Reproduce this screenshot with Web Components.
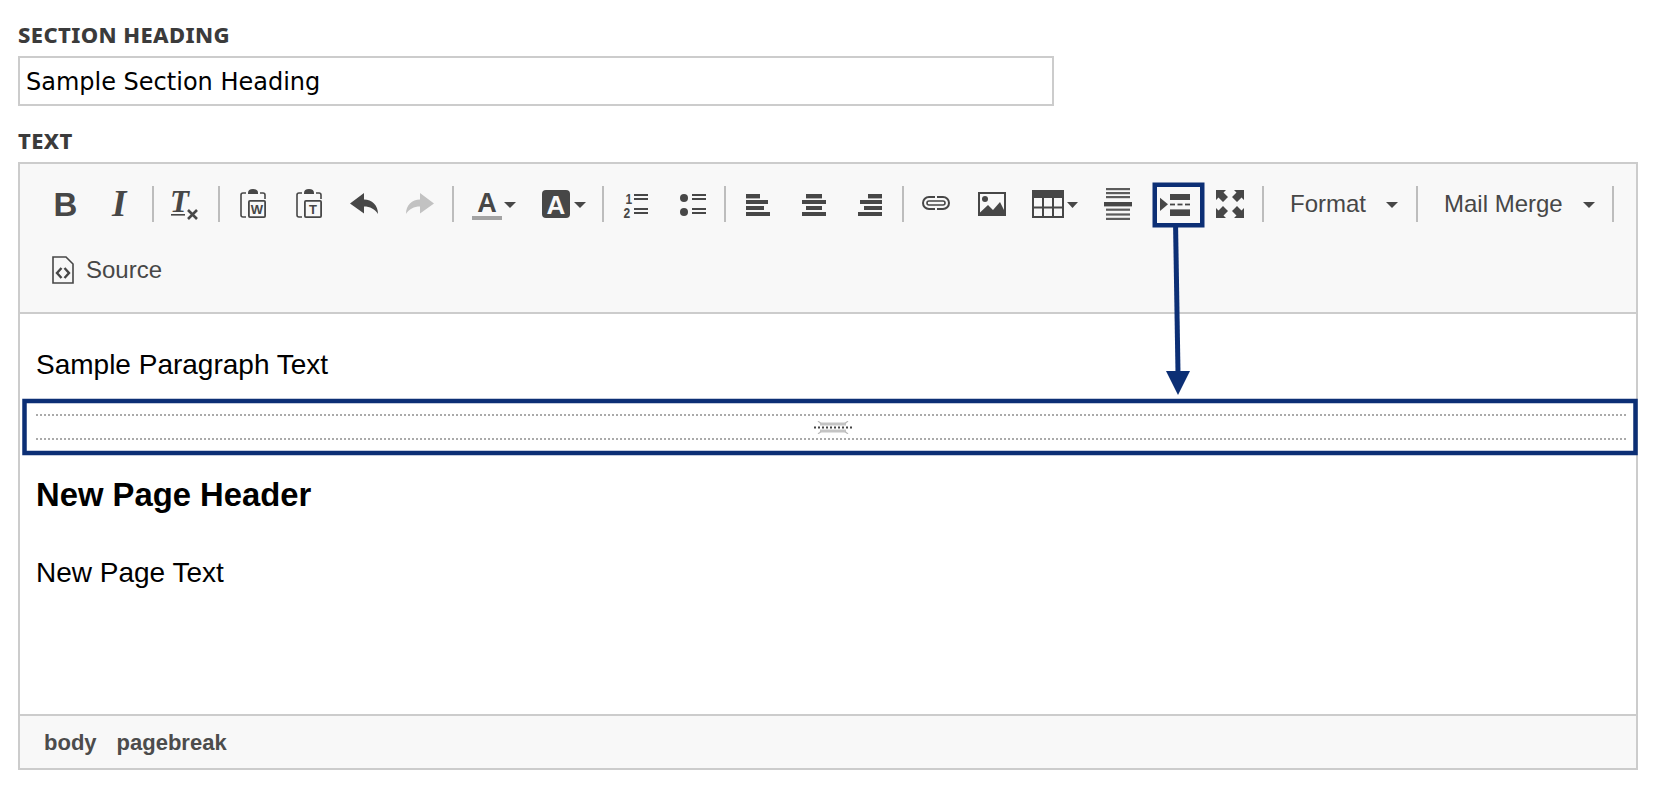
<!DOCTYPE html>
<html lang="en">
<head>
<meta charset="utf-8">
<title>Section editor</title>
<style>
  html, body { margin: 0; padding: 0; background: #fff; }
  body { font-family: "Liberation Sans", Arial, sans-serif; color: #000; }
</style>
</head>
<body>
<section-form>
  <field-label>SECTION HEADING</field-label>
  <text-field value="Sample Section Heading"></text-field>
  <field-label>TEXT</field-label>
  <rich-editor>
    <ed-toolbar slot="toolbar">
      <ed-tool icon="bold" w="56"></ed-tool>
      <ed-tool icon="italic" w="56"></ed-tool>
      <ed-sep w="8"></ed-sep>
      <ed-tool icon="clear" w="56"></ed-tool>
      <ed-sep w="12"></ed-sep>
      <ed-tool icon="pasteword" w="56"></ed-tool>
      <ed-tool icon="pastetext" w="56"></ed-tool>
      <ed-tool icon="undo" w="54"></ed-tool>
      <ed-tool icon="redo" w="58"></ed-tool>
      <ed-sep w="8"></ed-sep>
      <ed-tool icon="textcolor" w="74"></ed-tool>
      <ed-tool icon="bgcolor" w="66"></ed-tool>
      <ed-sep w="12"></ed-sep>
      <ed-tool icon="numbered" w="54"></ed-tool>
      <ed-tool icon="bulleted" w="60"></ed-tool>
      <ed-sep w="4"></ed-sep>
      <ed-tool icon="alignleft" w="62"></ed-tool>
      <ed-tool icon="aligncenter" w="50"></ed-tool>
      <ed-tool icon="alignright" w="62"></ed-tool>
      <ed-sep w="4"></ed-sep>
      <ed-tool icon="link" w="62"></ed-tool>
      <ed-tool icon="image" w="50"></ed-tool>
      <ed-tool icon="table" w="76"></ed-tool>
      <ed-tool icon="rule" w="50"></ed-tool>
      <ed-tool icon="pagebreak" w="64"></ed-tool>
      <ed-tool icon="maximize" w="46"></ed-tool>
      <ed-sep w="20"></ed-sep>
      <ed-combo w="143" pad="17" caret>Format</ed-combo>
      <ed-sep w="2"></ed-sep>
      <ed-combo w="194" pad="26" caret>Mail Merge</ed-combo>
      <ed-sep w="2"></ed-sep>
      <ed-combo w="140" pad="15" icon="source">Source</ed-combo>
    </ed-toolbar>
    <editor-para>Sample Paragraph Text</editor-para>
    <page-break></page-break>
    <editor-heading>New Page Header</editor-heading>
    <editor-para class="after">New Page Text</editor-para>
    <path-bar slot="footer">
      <path-item>body</path-item>
      <path-item>pagebreak</path-item>
    </path-bar>
  </rich-editor>
  <ed-callouts></ed-callouts>
</section-form>

<script>
"use strict";

const BLUE = "#0c2f75";
const ICON_TOP = 186;

// every icon sits in a 36px tall box so the row centres them the same way
const svg = (w, top, body) =>
  `<svg width="${w}" height="36" viewBox="0 ${ICON_TOP - top} ${w} 36" fill="currentColor">${body}</svg>`;

const bars = (rows) =>
  rows.map(([x, y, w, h]) => `<rect x="${x}" y="${y}" width="${w}" height="${h}"/>`).join("");

const clipboard = (letter) => `
  <path d="M6 5H3Q1 5 1 7V27Q1 29 3 29H6M20 5H23Q25 5 25 7V11" fill="none" stroke="currentColor" stroke-width="1.6"/>
  <path d="M8 5Q8 1 13 1Q18 1 18 5V6H8Z"/>
  <rect x="8.9" y="12.9" width="16.2" height="16.2" rx="1" fill="none" stroke="currentColor" stroke-width="1.8"/>
  <text x="17" y="26" text-anchor="middle" font-size="13" font-weight="700" class="sans">${letter}</text>`;

const undoPath = "M0 10.5L14 0V6.5C22 6.5 28 12 28 21C25 16 20 13.5 14 13.5V20.5Z";
const arrowCorner = "M0 0H10L7.5 2.5L12 7L7 12L2.5 7.5L0 10Z";

const ICONS = {
  bold: svg(20, 192, `<text x="-1.6" y="24" font-size="33" font-weight="700" class="sans">B</text>`),
  italic: svg(18, 192, `<text x="0" y="24" font-size="37" font-weight="700" font-style="italic" class="serif">I</text>`),
  clear: svg(28, 192, `
    <text x="-1" y="20" font-size="31" font-weight="700" font-style="italic" class="serif">T</text>
    <rect x="0" y="22" width="14" height="1.6"/>
    <path d="M17 18L26 27M26 18L17 27" stroke="currentColor" stroke-width="2.6" fill="none"/>`),
  pasteword: svg(26, 188, clipboard("W")),
  pastetext: svg(26, 188, clipboard("T")),
  undo: svg(28, 193, `<path d="${undoPath}"/>`),
  redo: svg(28, 193, `<path d="${undoPath}" fill="#c2c2c2" transform="matrix(-1 0 0 1 28 0)"/>`),
  textcolor: svg(44, 192, `
    <text x="15" y="20" text-anchor="middle" font-size="27" font-weight="700" class="sans">A</text>
    <rect x="0" y="24" width="30" height="4" fill="#a3a3a3"/>
    <polygon points="32,10 44,10 38,16"/>`),
  bgcolor: svg(44, 190, `
    <rect width="28" height="28" rx="4"/>
    <text x="14" y="23.5" text-anchor="middle" font-size="26" font-weight="700" fill="#f8f8f8" class="sans">A</text>
    <polygon points="32,12 44,12 38,18"/>`),
  numbered: svg(24, 193, `
    <text transform="translate(1.5 11) scale(.8 1)" font-size="15" font-weight="700" class="sans">1</text>
    <text transform="translate(-.5 25) scale(.8 1)" font-size="15" font-weight="700" class="sans">2</text>
    ${bars([[10, 1, 14, 2], [10, 5, 14, 2], [10, 15, 14, 2], [10, 19, 14, 2]])}`),
  bulleted: svg(26, 193, `
    <circle cx="4" cy="5" r="4"/><circle cx="4" cy="19" r="4"/>
    ${bars([[12, 1, 14, 2], [12, 5, 14, 2], [12, 15, 14, 2], [12, 19, 14, 2]])}`),
  alignleft: svg(24, 194, bars([[0, 0, 14, 4.4], [0, 6, 22, 4], [0, 12, 18, 4], [0, 18, 24, 4]])),
  aligncenter: svg(24, 194, bars([[4, 0, 16, 4.4], [0, 6, 24, 4], [4, 12, 16, 4], [0, 18, 24, 4]])),
  alignright: svg(24, 194, bars([[10, 0, 14, 4.4], [2, 6, 22, 4], [6, 12, 18, 4], [0, 18, 24, 4]])),
  link: svg(28, 196, `
    <g fill="none" stroke="currentColor">
      <path d="M13 1H7A6 6 0 0 0 7 13H13M15 1H21A6 6 0 0 1 21 13H15" stroke-width="2"/>
      <rect x="5" y="5" width="18" height="4" rx="2" stroke-width="1.6"/>
    </g>`),
  image: svg(28, 192, `
    <rect x="1" y="1" width="26" height="22" fill="none" stroke="currentColor" stroke-width="2"/>
    <circle cx="7" cy="7" r="3"/>
    <polygon points="2,22 2,20.5 10,13 15,18 22,10 26,18 26,22"/>`),
  table: svg(46, 190, `
    <rect x="0" y="0" width="32" height="8"/>
    <g fill="none" stroke="currentColor" stroke-width="2">
      <rect x="1" y="1" width="30" height="26"/>
      <path d="M11 8V27M21 8V27M1 17.5H31"/>
    </g>
    <polygon points="35,12 46,12 40.5,18"/>`),
  rule: svg(28, 188, `
    <g fill="#5c5c5c">${bars([[2, 0, 24, 2.2], [2, 4, 24, 2.2], [2, 8, 24, 2.2], [2, 20.6, 24, 2.2], [2, 25.4, 24, 2.2], [2, 29.8, 24, 2.2]])}</g>
    <rect x="0" y="14" width="28" height="4.4"/>`),
  pagebreak: svg(30, 194, `
    <polygon points="0,3.7 8,10.3 0,17"/>
    ${bars([[10, 0, 20, 6], [10, 9.6, 5, 1.8], [17.5, 9.6, 5, 1.8], [25, 9.6, 5, 1.8], [10, 15.4, 20, 6.6]])}`),
  maximize: svg(28, 190, `
    <path d="${arrowCorner}"/>
    <path d="${arrowCorner}" transform="matrix(-1 0 0 1 28 0)"/>
    <path d="${arrowCorner}" transform="matrix(1 0 0 -1 0 28)"/>
    <path d="${arrowCorner}" transform="matrix(-1 0 0 -1 28 28)"/>`),
  source: svg(22, 256 - 66, `
    <path d="M1 1H14L21 8V27H1Z" fill="none" stroke="currentColor" stroke-width="1.6"/>
    <path d="M9.5 12L5 17L9.5 22M12.5 12L17 17L12.5 22" fill="none" stroke="currentColor" stroke-width="2.4"/>`),
};

class SectionForm extends HTMLElement {
  constructor() {
    super();
    this.attachShadow({ mode: "open" }).innerHTML = `
    <style>
      :host {
        display: block;
        position: relative;
        box-sizing: border-box;
        width: 1674px;
        height: 790px;
        padding: 21px 0 0 18px;
        overflow: hidden;
      }
    </style>
    <slot></slot>`;
  }
}

class FieldLabel extends HTMLElement {
  constructor() {
    super();
    this.attachShadow({ mode: "open" }).innerHTML = `
    <style>
      :host {
        display: block;
        height: 28px;
        margin-bottom: 7px;
        font: 800 22px/26px "Noto Sans", sans-serif;
        letter-spacing: .4px;
        color: #3b3b3b;
      }
    </style>
    <slot></slot>`;
  }
}

class TextField extends HTMLElement {
  constructor() {
    super();
    this.attachShadow({ mode: "open" }).innerHTML = `
    <style>
      :host {
        display: block;
        box-sizing: border-box;
        width: 1036px;
        height: 50px;
        margin-bottom: 21px;
        border: 2px solid #cccccc;
        padding-left: 6px;
        font: 24px/48px "DejaVu Sans", sans-serif;
        color: #000;
        white-space: nowrap;
      }
    </style>
    <span id="val"></span>`;
  }
  connectedCallback() {
    this.shadowRoot.querySelector("#val").textContent = this.getAttribute("value");
  }
}

class RichEditor extends HTMLElement {
  constructor() {
    super();
    this.attachShadow({ mode: "open" }).innerHTML = `
    <style>
      :host {
        display: block;
        box-sizing: border-box;
        width: 1620px;
        border: 2px solid #cccccc;
      }
      .body {
        box-sizing: border-box;
        height: 400px;
        padding: 31px 8px 0 16px;
      }
    </style>
    <slot name="toolbar"></slot>
    <div class="body"><slot></slot></div>
    <slot name="footer"></slot>`;
  }
}

class EdToolbar extends HTMLElement {
  constructor() {
    super();
    this.attachShadow({ mode: "open" }).innerHTML = `
    <style>
      :host {
        display: flex;
        flex-wrap: wrap;
        row-gap: 6px;
        box-sizing: content-box;
        height: 126px;
        padding: 10px 0 12px 17px;
        background: #f8f8f8;
        border-bottom: 2px solid #cccccc;
        color: #474747;
      }
    </style>
    <slot></slot>`;
  }
}

class EdTool extends HTMLElement {
  constructor() {
    super();
    this.attachShadow({ mode: "open" }).innerHTML = `
    <style>
      :host {
        display: flex;
        align-items: center;
        justify-content: center;
        height: 60px;
        flex: none;
      }
      svg { display: block; overflow: visible; }
      .sans { font-family: "Liberation Sans", sans-serif; }
      .serif { font-family: "Liberation Serif", serif; }
    </style>
    <span id="ic"></span>`;
  }
  connectedCallback() {
    this.style.width = `${this.getAttribute("w")}px`;
    this.shadowRoot.querySelector("#ic").innerHTML = ICONS[this.getAttribute("icon")];
  }
}

class EdSep extends HTMLElement {
  constructor() {
    super();
    this.attachShadow({ mode: "open" }).innerHTML = `
    <style>
      :host {
        display: flex;
        align-items: center;
        justify-content: center;
        height: 60px;
        flex: none;
      }
      i { display: block; width: 2px; height: 36px; background: #bdbdbd; }
    </style>
    <i></i>`;
  }
  connectedCallback() {
    this.style.width = `${this.getAttribute("w")}px`;
  }
}

class EdCombo extends HTMLElement {
  constructor() {
    super();
    this.attachShadow({ mode: "open" }).innerHTML = `
    <style>
      :host {
        display: flex;
        align-items: center;
        box-sizing: border-box;
        height: 60px;
        flex: none;
        font: 24px "Liberation Sans", sans-serif;
        color: #474747;
      }
      #ic svg { display: block; margin-right: 12px; }
      #ic:empty, .caret[hidden] { display: none; }
      .caret {
        width: 0;
        height: 0;
        margin: 2px 0 0 20px;
        border-top: 6px solid #474747;
        border-left: 6px solid transparent;
        border-right: 6px solid transparent;
      }
    </style>
    <span id="ic"></span><slot></slot><span class="caret" hidden></span>`;
  }
  connectedCallback() {
    this.style.width = `${this.getAttribute("w")}px`;
    this.style.paddingLeft = `${this.getAttribute("pad")}px`;
    const icon = this.getAttribute("icon");
    if (icon) this.shadowRoot.querySelector("#ic").innerHTML = ICONS[icon];
    this.shadowRoot.querySelector(".caret").hidden = !this.hasAttribute("caret");
  }
}

class EditorPara extends HTMLElement {
  constructor() {
    super();
    this.attachShadow({ mode: "open" }).innerHTML = `
    <style>
      :host {
        display: block;
        font: 28px/40px "Liberation Sans", Arial, sans-serif;
        color: #000;
      }
      :host(.after) { margin-top: 36px; }
    </style>
    <slot></slot>`;
  }
}

class EditorHeading extends HTMLElement {
  constructor() {
    super();
    this.attachShadow({ mode: "open" }).innerHTML = `
    <style>
      :host {
        display: block;
        margin-top: 33px;
        font: 700 32.8px/44px "Liberation Sans", Arial, sans-serif;
        color: #000;
      }
    </style>
    <slot></slot>`;
  }
}

class PageBreak extends HTMLElement {
  constructor() {
    super();
    this.attachShadow({ mode: "open" }).innerHTML = `
    <style>
      :host {
        display: flex;
        align-items: center;
        justify-content: center;
        height: 26px;
        margin-top: 29px;
        background-image:
          repeating-linear-gradient(to right, #aaa 0 2px, transparent 2px 4px),
          repeating-linear-gradient(to right, #aaa 0 2px, transparent 2px 4px);
        background-size: 100% 2px, 100% 2px;
        background-position: 0 0, 0 100%;
        background-repeat: no-repeat;
      }
      svg { display: block; margin-left: 2px; }
    </style>
    <svg width="38" height="13" viewBox="0 0 38 13">
      <g fill="#c4c4c4">
        <rect x="6" y="1.5" width="26" height="3"/>
        <rect x="6" y="8.5" width="26" height="3"/>
      </g>
      <path d="M4 0L7 2.5M34 0L31 2.5M4 13L7 10.5M34 13L31 10.5" stroke="#bbb" stroke-width="1.2"/>
      <path d="M0 6.5H38" stroke="#444" stroke-width="2" stroke-dasharray="2 2"/>
    </svg>`;
  }
}

class PathBar extends HTMLElement {
  constructor() {
    super();
    this.attachShadow({ mode: "open" }).innerHTML = `
    <style>
      :host {
        display: flex;
        align-items: center;
        gap: 20px;
        box-sizing: border-box;
        height: 54px;
        padding: 2px 0 0 24px;
        background: #f8f8f8;
        border-top: 2px solid #cccccc;
      }
    </style>
    <slot></slot>`;
  }
}

class PathItem extends HTMLElement {
  constructor() {
    super();
    this.attachShadow({ mode: "open" }).innerHTML = `
    <style>
      :host {
        display: block;
        font: 700 22px "Liberation Sans", Arial, sans-serif;
        color: #4c4c4c;
      }
    </style>
    <slot></slot>`;
  }
}

// the blue annotation lies over the editor, so it is a free layer
class EdCallouts extends HTMLElement {
  constructor() {
    super();
    this.attachShadow({ mode: "open" }).innerHTML = `
    <style>
      :host {
        position: absolute;
        inset: 0;
        pointer-events: none;
      }
      svg { display: block; }
    </style>
    <svg width="1674" height="790" viewBox="0 0 1674 790" fill="none" stroke="${BLUE}" stroke-width="4.5">
      <rect x="1154.75" y="184.75" width="47.5" height="40.5"/>
      <rect x="24.5" y="401" width="1611" height="52"/>
      <path d="M1175.6 227L1178 373" stroke-width="5"/>
      <polygon points="1166,371 1190,371 1178,395" fill="${BLUE}" stroke="none"/>
    </svg>`;
  }
}

customElements.define("section-form", SectionForm);
customElements.define("field-label", FieldLabel);
customElements.define("text-field", TextField);
customElements.define("rich-editor", RichEditor);
customElements.define("ed-toolbar", EdToolbar);
customElements.define("ed-tool", EdTool);
customElements.define("ed-sep", EdSep);
customElements.define("ed-combo", EdCombo);
customElements.define("editor-para", EditorPara);
customElements.define("editor-heading", EditorHeading);
customElements.define("page-break", PageBreak);
customElements.define("path-bar", PathBar);
customElements.define("path-item", PathItem);
customElements.define("ed-callouts", EdCallouts);
</script>
</body>
</html>
